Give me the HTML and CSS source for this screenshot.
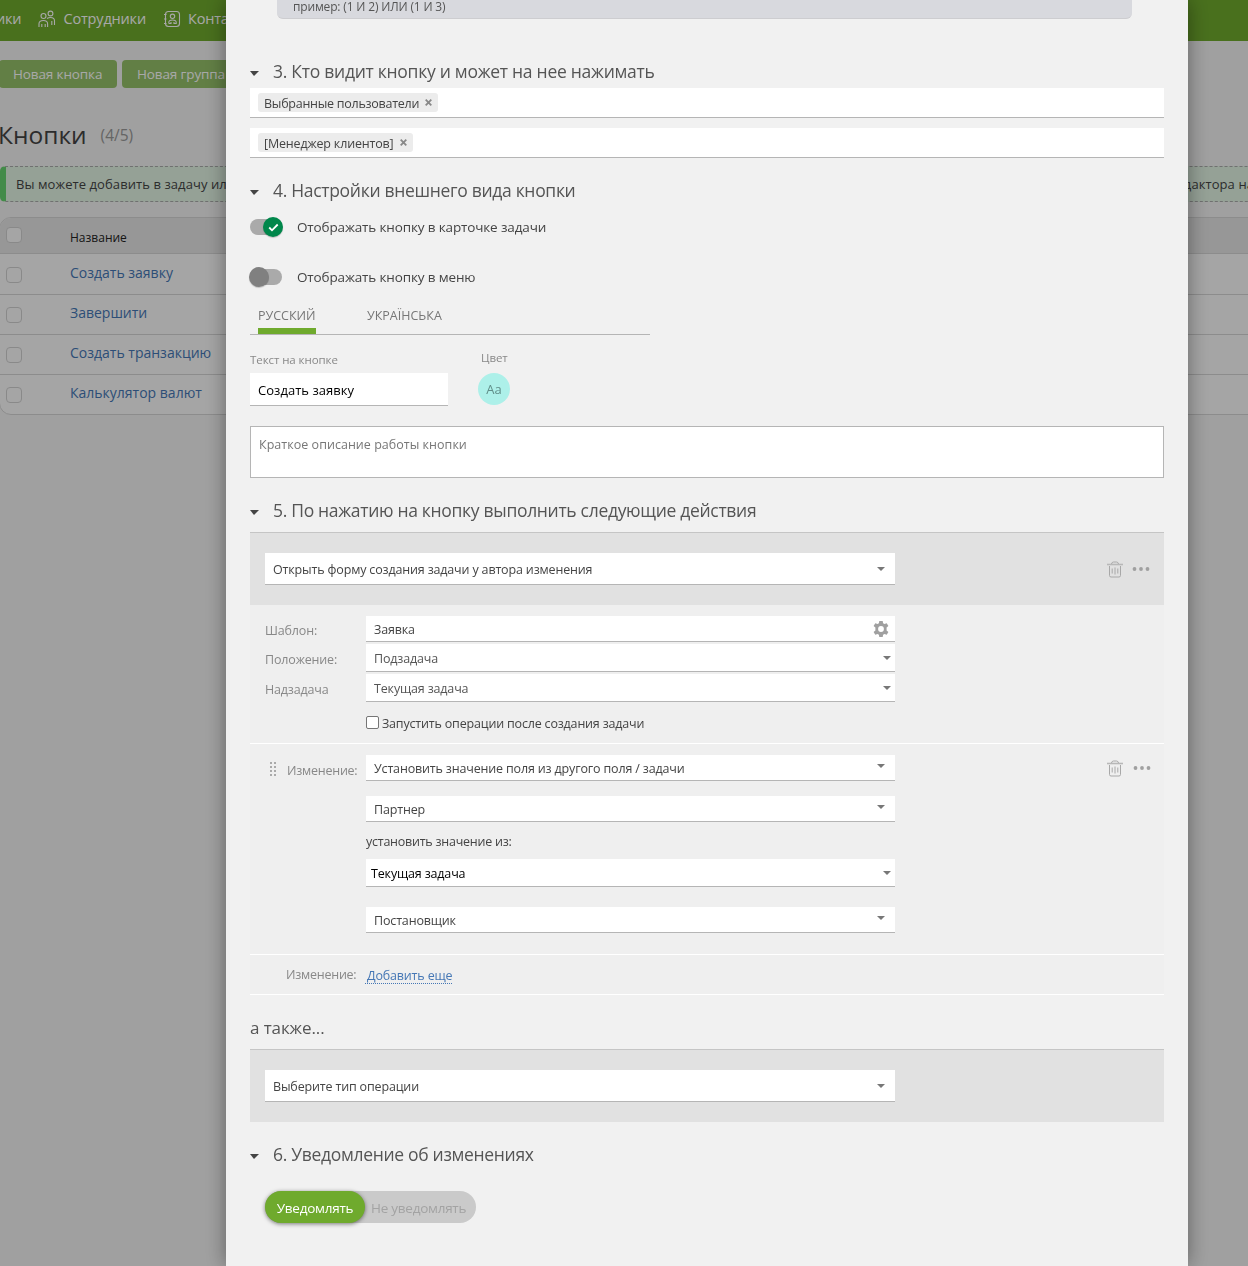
FILE: index.html
```html
<!doctype html>
<html lang="ru">
<head>
	<meta charset="UTF-8">
	<title>Кнопки</title>
	<link rel="stylesheet" href="styles.css">
</head>
<body>
	<div class="page">
		<div class="topbar">
			<span class="nav-item nav-cut">ики</span>
			<span class="nav-item">
				<svg width="18" height="18" viewBox="0 0 18 18"><circle cx="5.500" cy="6" r="2.500"/><circle cx="12.500" cy="3.500" r="2.400"/><path d="M1 17v-3.200c0-2.200 1.800-3.300 4.300-3.300s4.300 1.100 4.300 3.300V17M3.800 14v3M7.200 14v3M9 8.500c1-.6 2.200-1 3.500-1 2.500 0 4 1.200 4 3.300V15M13.800 11v4"/></svg>
				Сотрудники
			</span>
			<span class="nav-item">
				<svg width="18" height="18" viewBox="0 0 18 18"><rect x="2.500" y="1.500" width="14" height="15" rx="3"/><circle cx="9.500" cy="6.300" r="2.200"/><path d="M5.800 13.500v-1c0-1.500 1.500-2.500 3.700-2.500s3.700 1 3.700 2.500v1h-2.200v-1.500M8 12v1.500H5.800M1 4.500h2.500M1 9h2.500M1 13.500h2.500"/></svg>
				Контакты
			</span>
		</div>
		<div class="toolbar">
			<span class="tool-btn first">Новая кнопка</span>
			<span class="tool-btn">Новая группа</span>
		</div>
		<div class="page-title"><h1>Кнопки</h1><span>(4/5)</span></div>
		<div class="notice">
			<span>Вы можете добавить в задачу или</span>
			<span class="notice-end">редактора на</span>
		</div>
		<div class="table">
			<div class="tr th"><i class="box"></i><span>Название</span></div>
			<div class="tr"><i class="box"></i><a>Создать заявку</a></div>
			<div class="tr"><i class="box"></i><a>Завершити</a></div>
			<div class="tr"><i class="box"></i><a>Создать транзакцию</a></div>
			<div class="tr"><i class="box"></i><a>Калькулятор валют</a></div>
		</div>
	</div>
	<div class="overlay"></div>

	<div class="panel">
		<div class="hint">пример: (1 И 2) ИЛИ (1 И 3)</div>

		<h2 class="h3"><i class="caret"></i>3. Кто видит кнопку и может на нее нажимать</h2>
		<div class="tags"><span class="tag"><b>Выбранные пользователи</b><svg width="7" height="7" viewBox="0 0 7 7"><path d="M.7.7l5.600 5.600M6.300.7L.7 6.300"/></svg></span></div>
		<div class="tags"><span class="tag"><b class="role">[Менеджер клиентов]</b><svg width="7" height="7" viewBox="0 0 7 7"><path d="M.7.7l5.600 5.600M6.300.7L.7 6.300"/></svg></span></div>

		<h2 class="h4"><i class="caret"></i>4. Настройки внешнего вида кнопки</h2>
		<div class="switch-row on">
			<div class="switch"><i><svg width="11" height="9" viewBox="0 0 11 9"><path d="M1.200 4.500l2.800 2.800L9.700 1.500"/></svg></i></div>
			<span>Отображать кнопку в карточке задачи</span>
		</div>
		<div class="switch-row">
			<div class="switch"><i></i></div>
			<span>Отображать кнопку в меню</span>
		</div>
		<div class="tabs">
			<span class="tab active">РУССКИЙ</span>
			<span class="tab">УКРАЇНСЬКА</span>
		</div>
		<div class="btn-look">
			<div class="look-text">
				<label>Текст на кнопке</label>
				<div class="input">Создать заявку</div>
			</div>
			<div class="look-color">
				<label>Цвет</label>
				<div class="swatch">Aa</div>
			</div>
		</div>
		<div class="textarea">Краткое описание работы кнопки</div>

		<h2 class="h5"><i class="caret"></i>5. По нажатию на кнопку выполнить следующие действия</h2>
		<div class="op-head">
			<div class="select big">Открыть форму создания задачи у автора изменения<i class="arrow"></i></div>
			<div class="tools">
				<svg class="trash" width="16" height="17" viewBox="0 0 16 17"><path class="lid" d="M0 3.500h16"/><path d="M4.500 3q.3-2 2-2h3q1.700 0 2 2M2.500 5v9.500q0 1.500 1.500 1.500h8q1.500 0 1.500-1.500V5M5.200 7.500v5M8 6.500v7M10.800 7.500v5"/></svg>
				<svg class="dots" width="18" height="4" viewBox="0 0 18 4"><circle cx="2.500" cy="2" r="1.900"/><circle cx="9" cy="2" r="1.900"/><circle cx="15.500" cy="2" r="1.900"/></svg>
			</div>
		</div>
		<div class="op-body">
			<div class="row"><label>Шаблон:</label><div class="select dark">Заявка<svg class="gear" width="16" height="16" viewBox="0 0 16 16"><path fill-rule="evenodd" d="M6.300 0h3.400l.4 2.300 1.400.8 2.200-.9 1.700 2.900L13.600 6.600v2.800l1.800 1.500-1.700 2.900-2.200-.9-1.400.8-.4 2.300H6.300l-.4-2.300-1.400-.8-2.200.9-1.700-2.900 1.800-1.500V6.600L.6 5.100l1.700-2.900 2.200.9 1.400-.8zM8 5.100a2.900 2.900 0 1 0 0 5.800 2.900 2.900 0 0 0 0-5.800z"/></svg></div></div>
			<div class="row"><label>Положение:</label><div class="select native">Подзадача<i class="arrow"></i></div></div>
			<div class="row"><label>Надзадача</label><div class="select native">Текущая задача<i class="arrow"></i></div></div>
			<div class="check-row"><i class="check"></i><span>Запустить операции после создания задачи</span></div>
		</div>
		<div class="change">
			<div class="change-label">
				<svg width="7" height="15" viewBox="0 0 7 15"><path d="M0 0h2v2H0zM4 0h2v2H4zM0 4h2v2H0zM4 4h2v2H4zM0 8h2v2H0zM4 8h2v2H4zM0 12h2v2H0zM4 12h2v2H4z"/></svg>
				<label>Изменение:</label>
			</div>
			<div class="change-fields">
				<div class="select s1">Установить значение поля из другого поля / задачи<i class="arrow"></i></div>
				<div class="select s2">Партнер<i class="arrow"></i></div>
				<div class="from">установить значение из:</div>
				<div class="select native black">Текущая задача<i class="arrow"></i></div>
				<div class="select s3">Постановщик<i class="arrow"></i></div>
			</div>
			<div class="tools">
				<svg class="trash" width="16" height="17" viewBox="0 0 16 17"><path class="lid" d="M0 3.500h16"/><path d="M4.500 3q.3-2 2-2h3q1.700 0 2 2M2.500 5v9.500q0 1.500 1.500 1.500h8q1.500 0 1.500-1.500V5M5.200 7.500v5M8 6.500v7M10.800 7.500v5"/></svg>
				<svg class="dots" width="18" height="4" viewBox="0 0 18 4"><circle cx="2.500" cy="2" r="1.900"/><circle cx="9" cy="2" r="1.900"/><circle cx="15.500" cy="2" r="1.900"/></svg>
			</div>
		</div>
		<div class="add-row"><label>Изменение:</label><a>Добавить еще</a></div>

		<div class="also">а также...</div>
		<div class="op-head">
			<div class="select big">Выберите тип операции<i class="arrow"></i></div>
		</div>

		<h2 class="h6"><i class="caret"></i>6. Уведомление об изменениях</h2>
		<div class="notify">
			<span class="yes">Уведомлять</span>
			<span class="no">Не уведомлять</span>
		</div>
	</div>
</body>
</html>
```

FILE: styles.css
```css
*{
	box-sizing: border-box;
}
html,
body{
	height: 100%;
	overflow: hidden;
}
body{
	margin: 0;
	font: 12.5px/18px "Segoe UI", "Open Sans", "Noto Sans", sans-serif;
	color: #444;
	background: #f3f3f3;
}
svg{
	display: block;
	flex: none;
}
a{
	color: #4577b5;
}

/* страница под панелью */
.topbar{
	display: flex;
	align-items: center;
	height: 41px;
	padding-bottom: 4px;
	background: #6faa2d;
	color: #fff;
	font-size: 14.5px;
	letter-spacing: -.17px;
	white-space: nowrap;
}
.nav-item{
	display: flex;
	align-items: center;
	gap: 7px;
	margin-right: 17px;
}
.nav-item svg{
	fill: none;
	stroke: #fff;
	stroke-width: 1.1;
}
.nav-cut{
	margin-left: -4px;
}
.toolbar{
	display: flex;
	gap: 5px;
	padding-top: 19px;
	font-size: 13.5px;
	letter-spacing: -.12px;
}
.tool-btn{
	height: 28px;
	line-height: 28px;
	padding: 0 15px;
	border-radius: 4px;
	background: #95c169;
	color: #fff;
	white-space: nowrap;
}
.tool-btn.first{
	width: 118px;
	margin-left: -1px;
	padding: 0 14px;
}
.page-title{
	display: flex;
	align-items: center;
	gap: 14px;
	height: 36px;
	margin-top: 29px;
	margin-left: -2px;
	font-size: 15.5px;
	color: #999;
}
.page-title h1{
	margin: 0;
	font-size: 24.5px;
	font-weight: normal;
	color: #444;
}
.notice{
	display: flex;
	justify-content: space-between;
	height: 36px;
	margin: 13px -20px 0 0;
	padding-left: 10px;
	border: 1px dashed #aaa;
	border-left: 6px solid #67d46f;
	border-radius: 5px;
	background: #e2f4e4;
	line-height: 35px;
	font-size: 13px;
	letter-spacing: .08px;
}
.notice-end{
	padding-right: 13px;
}
.table{
	margin: 15px -20px 0 -1px;
	border: 1px solid #d5d5d5;
	border-radius: 12px;
	overflow: hidden;
	background: #fbfbfb;
}
.tr{
	display: flex;
	align-items: center;
	height: 40px;
	padding-left: 6px;
	border-top: 1px solid #d5d5d5;
	font-size: 14px;
}
.tr.th{
	height: 35px;
	border-top: 0;
	background: #e6e6e6;
	font-size: 12px;
	color: #222;
}
.th span{
	padding-top: 4px;
}
.tr a{
	padding-bottom: 3px;
}
.tr.th + .tr{
	height: 41px;
}
.box{
	width: 16px;
	height: 16px;
	margin-right: 48px;
	border: 1px solid #d0d0d0;
	border-radius: 4px;
	background: #fbfbfb;
}
.th .box{
	margin-bottom: 2px;
}
.th + .tr .box{
	margin-top: 1px;
}
.overlay{
	position: fixed;
	top: 0;
	left: 0;
	right: 0;
	bottom: 0;
	background: rgba(0,0,0,.34);
}

/* панель настроек */
.panel{
	position: fixed;
	top: 0;
	bottom: 0;
	left: 226px;
	width: 962px;
	padding: 0 24px;
	background: #f1f1f1;
	box-shadow: 0 0 20px rgba(0,0,0,.4);
	letter-spacing: -.16px;
	white-space: nowrap;
}
.panel label{
	color: #888;
}
.hint{
	width: 855px;
	height: 19px;
	margin-left: 27px;
	padding: 0 16px;
	border-bottom: 1px solid #cdcdd0;
	border-radius: 0 0 6px 6px;
	background: #d8d9de;
	line-height: 14px;
	font-size: 12px;
	color: #555;
}
.panel h2{
	display: flex;
	align-items: center;
	height: 32px;
	margin: 17px 0 0;
	padding-bottom: 2px;
	font-size: 17.5px;
	font-weight: normal;
	letter-spacing: -.31px;
	color: #555;
}
.panel .h3{
	margin-top: 37px;
	letter-spacing: -.27px;
}
.caret{
	margin: 5px 14px 0 0;
	border: solid transparent;
	border-width: 5px 5px 0 4px;
	border-top-color: #444;
}
.tags{
	display: flex;
	height: 30px;
	padding: 5px 8px;
	background: #fff;
	border-bottom: 1px solid #b5b5b5;
}
.tags + .tags{
	margin-top: 10px;
}
.tag{
	display: flex;
	height: 19px;
	padding: 0 6px;
	border-radius: 3px;
	background: #ececec;
	line-height: 21px;
}
.tag b{
	font-weight: normal;
	letter-spacing: -.26px;
}
.tag .role{
	letter-spacing: -.17px;
}
.tag svg{
	margin: 6px 0 0 6px;
	fill: none;
	stroke: #888;
	stroke-width: 1.8;
}
.switch-row{
	display: flex;
	align-items: center;
	height: 50px;
	font-size: 13.5px;
	letter-spacing: -.14px;
}
.switch-row.on{
	margin-top: -5px;
}
.switch{
	display: flex;
	align-items: center;
	width: 32px;
	height: 16px;
	margin-right: 15px;
	border-radius: 8px;
	background: #aaa;
}
.switch i{
	display: flex;
	align-items: center;
	justify-content: center;
	flex: none;
	width: 20px;
	height: 20px;
	margin-left: -1px;
	border-radius: 50%;
	background: #808080;
	box-shadow: 0 1px 1px rgba(0,0,0,.2);
}
.on .switch i{
	margin-left: 13px;
	background: #00874b;
}
.switch svg{
	fill: none;
	stroke: #fff;
	stroke-width: 1.8;
}
.tabs{
	display: flex;
	width: 400px;
	height: 33px;
	padding-left: 8px;
	border-bottom: 1px solid #b5b5b5;
	line-height: 27px;
	letter-spacing: 0;
	color: #777;
}
.tab{
	margin-right: 51px;
}
.tab.active{
	width: 58px;
	border-bottom: 6px solid #6faa2d;
}
.btn-look{
	display: flex;
	gap: 30px;
	height: 71px;
	letter-spacing: -.08px;
}
.btn-look label{
	display: block;
	height: 38px;
	padding-top: 16px;
	font-size: 11.5px;
}
.look-color label{
	padding: 14px 0 0 3px;
}
.input{
	width: 198px;
	height: 33px;
	padding-left: 8px;
	border-bottom: 1px solid #b5b5b5;
	background: #fff;
	line-height: 34px;
	font-size: 13px;
	letter-spacing: .03px;
	color: #000;
}
.swatch{
	width: 32px;
	height: 32px;
	border-radius: 50%;
	background: #adf0e9;
	line-height: 33px;
	text-align: center;
	font-size: 13px;
	color: #608e89;
}
.textarea{
	height: 52px;
	margin-top: 20px;
	padding: 9px 8px;
	border: 1px solid #b5b5b5;
	background: #fff;
	letter-spacing: .03px;
	color: #777;
}
.op-head{
	display: flex;
	justify-content: space-between;
	height: 73px;
	margin-top: 5px;
	padding: 20px 14px 20px 15px;
	border-top: 1px solid #c5c5c5;
	background: #e1e1e1;
}
.select{
	display: flex;
	align-items: center;
	justify-content: space-between;
	width: 529px;
	height: 26px;
	padding: 2px 10px 0 8px;
	border-bottom: 1px solid #b5b5b5;
	background: #fff;
	color: #444;
}
.select.big{
	width: 630px;
	height: 32px;
}
.select.native{
	height: 28px;
	padding-right: 4px;
	color: #555;
}
.select.dark{
	padding-right: 6px;
}
.select.black{
	padding-left: 5px;
	color: #000;
}
.arrow{
	margin-bottom: 2px;
	border: solid transparent;
	border-width: 4px 4px 0;
	border-top-color: #777;
}
.s1 .arrow,
.s2 .arrow,
.s3 .arrow{
	margin-bottom: 6px;
}
.gear{
	margin-bottom: 2px;
	fill: #a0a0a0;
}
.tools{
	display: flex;
	align-items: center;
	height: 32px;
	gap: 9px;
}
.trash{
	fill: none;
	stroke: #a8a8a8;
}
.lid{
	stroke: #b8b8b8;
	stroke-width: 1.6;
}
.dots{
	fill: #a0a0a0;
}
.op-body{
	height: 139px;
	padding: 11px 15px 0;
	border-bottom: 1px solid #fff;
	background: #efefef;
}
.row{
	display: flex;
	align-items: center;
	margin-bottom: 2px;
}
.row label{
	width: 101px;
	padding-top: 4px;
}
.check-row{
	display: flex;
	align-items: center;
	height: 18px;
	margin: 12px 0 0 101px;
}
.check-row span{
	padding-top: 2px;
	letter-spacing: -.18px;
}
.check{
	width: 13px;
	height: 13px;
	margin: -2px 3px 0 0;
	border: 1px solid #767676;
	border-radius: 2px;
	background: #fff;
}
.change{
	display: flex;
	height: 211px;
	padding: 11px 13px 0 20px;
	border-bottom: 1px solid #fff;
	background: #efefef;
}
.change-label{
	display: flex;
	width: 96px;
	padding-top: 7px;
}
.change-label svg{
	margin-right: 10px;
	fill: #aaa;
}
.change-label label,
.add-row label{
	letter-spacing: -.24px;
}
.change-fields{
	width: 529px;
}
.s2{
	margin-top: 15px;
}
.from{
	height: 37px;
	padding-top: 11px;
	letter-spacing: -.24px;
}
.s3{
	margin-top: 20px;
}
.change .tools{
	height: 26px;
	margin-left: auto;
	gap: 10px;
}
.add-row{
	display: flex;
	height: 40px;
	padding-left: 36px;
	border-bottom: 1px solid #fff;
	background: #efefef;
	line-height: 39px;
}
.add-row label{
	width: 79px;
}
.add-row a{
	height: 18px;
	margin-top: 11px;
	padding-left: 2px;
	border-bottom: 1px dotted #4577b5;
	line-height: 19px;
}
.also{
	height: 32px;
	margin-top: 17px;
	line-height: 32px;
	font-size: 17px;
	letter-spacing: -.1px;
	color: #555;
}
.notify{
	display: flex;
	width: 211px;
	height: 32px;
	margin: 20px 0 0 15px;
	border-radius: 16px;
	background: #cacaca;
	line-height: 34px;
	font-size: 13.5px;
	letter-spacing: -.25px;
	color: #a3a3a3;
}
.yes{
	width: 100px;
	border-radius: 16px;
	background: #6faa2d;
	box-shadow: 0 1px 4px rgba(0,0,0,.5);
	text-align: center;
	color: #fff;
}
.no{
	padding-left: 6px;
}
```
